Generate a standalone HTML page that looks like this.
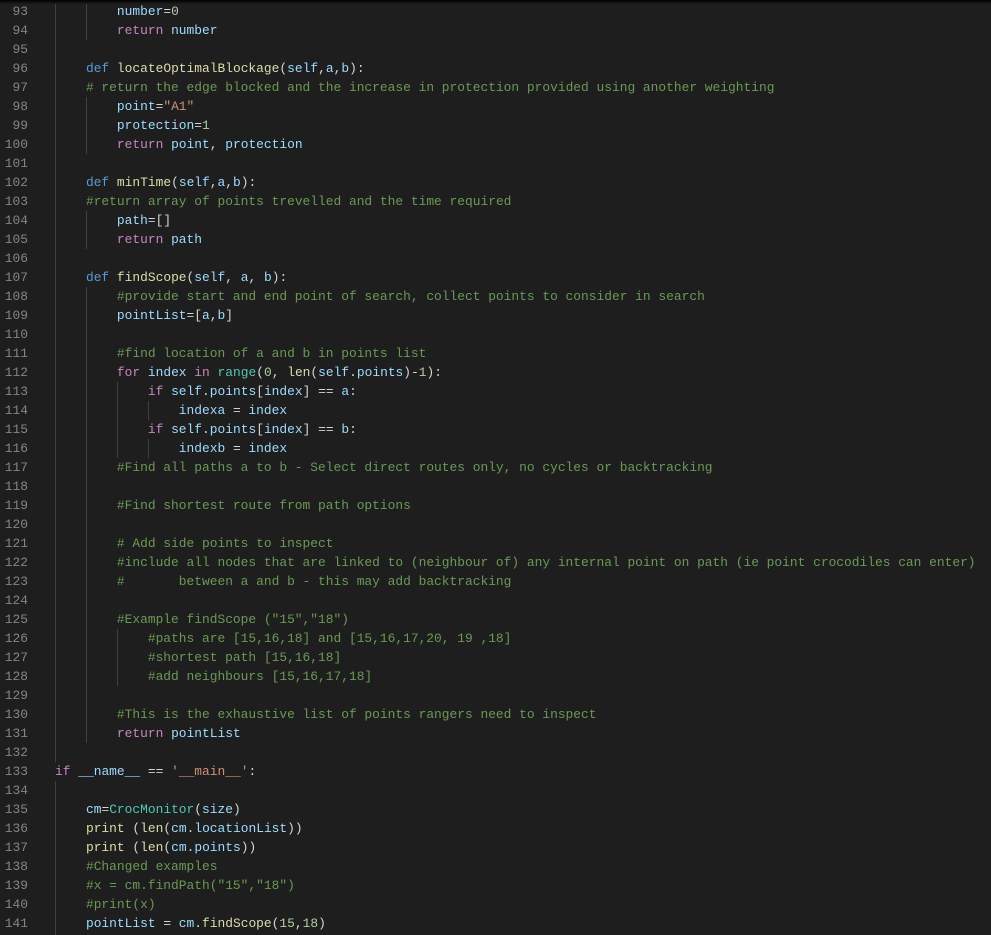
<!DOCTYPE html><html><head><style>
body{margin:0;background:#1e1e1e;width:991px;height:935px;overflow:hidden;position:relative}
.top{position:absolute;left:0;top:0;width:991px;height:4px;background:linear-gradient(#000,#1e1e1e)}
.l{position:absolute;left:0;height:19px;line-height:19px;font-family:"Liberation Mono",monospace;font-size:12.9px;white-space:pre;color:#d4d4d4}
.n{position:absolute;left:0;width:28px;text-align:right;color:#858585}
.c{position:absolute;left:55px}
.g{position:absolute;width:1px;background:#404040}
.k{color:#569cd6}.f{color:#dcdcaa}.v{color:#9cdcfe}.r{color:#c586c0}.m{color:#6a9955}.s{color:#ce9178}.d{color:#b5cea8}.t{color:#4ec9b0}
</style></head><body>
<div class="g" style="left:55px;top:2px;height:760px"></div>
<div class="g" style="left:86px;top:2px;height:38px"></div>
<div class="g" style="left:86px;top:97px;height:57px"></div>
<div class="g" style="left:86px;top:211px;height:38px"></div>
<div class="g" style="left:86px;top:287px;height:456px"></div>
<div class="g" style="left:117px;top:382px;height:76px"></div>
<div class="g" style="left:117px;top:629px;height:57px"></div>
<div class="g" style="left:148px;top:401px;height:19px"></div>
<div class="g" style="left:148px;top:439px;height:19px"></div>
<div class="top"></div>
<div class="l" style="top:2px"><span class="n">93</span><span class="c">        <span class="v">number</span>=<span class="d">0</span></span></div>
<div class="l" style="top:21px"><span class="n">94</span><span class="c">        <span class="r">return</span> <span class="v">number</span></span></div>
<div class="l" style="top:40px"><span class="n">95</span></div>
<div class="l" style="top:59px"><span class="n">96</span><span class="c">    <span class="k">def</span> <span class="f">locateOptimalBlockage</span>(<span class="v">self</span>,<span class="v">a</span>,<span class="v">b</span>):</span></div>
<div class="l" style="top:78px"><span class="n">97</span><span class="c">    <span class="m"># return the edge blocked and the increase in protection provided using another weighting</span></span></div>
<div class="l" style="top:97px"><span class="n">98</span><span class="c">        <span class="v">point</span>=<span class="s">"A1"</span></span></div>
<div class="l" style="top:116px"><span class="n">99</span><span class="c">        <span class="v">protection</span>=<span class="d">1</span></span></div>
<div class="l" style="top:135px"><span class="n">100</span><span class="c">        <span class="r">return</span> <span class="v">point</span>, <span class="v">protection</span></span></div>
<div class="l" style="top:154px"><span class="n">101</span></div>
<div class="l" style="top:173px"><span class="n">102</span><span class="c">    <span class="k">def</span> <span class="f">minTime</span>(<span class="v">self</span>,<span class="v">a</span>,<span class="v">b</span>):</span></div>
<div class="l" style="top:192px"><span class="n">103</span><span class="c">    <span class="m">#return array of points trevelled and the time required</span></span></div>
<div class="l" style="top:211px"><span class="n">104</span><span class="c">        <span class="v">path</span>=[]</span></div>
<div class="l" style="top:230px"><span class="n">105</span><span class="c">        <span class="r">return</span> <span class="v">path</span></span></div>
<div class="l" style="top:249px"><span class="n">106</span></div>
<div class="l" style="top:268px"><span class="n">107</span><span class="c">    <span class="k">def</span> <span class="f">findScope</span>(<span class="v">self</span>, <span class="v">a</span>, <span class="v">b</span>):</span></div>
<div class="l" style="top:287px"><span class="n">108</span><span class="c">        <span class="m">#provide start and end point of search, collect points to consider in search</span></span></div>
<div class="l" style="top:306px"><span class="n">109</span><span class="c">        <span class="v">pointList</span>=[<span class="v">a</span>,<span class="v">b</span>]</span></div>
<div class="l" style="top:325px"><span class="n">110</span></div>
<div class="l" style="top:344px"><span class="n">111</span><span class="c">        <span class="m">#find location of a and b in points list</span></span></div>
<div class="l" style="top:363px"><span class="n">112</span><span class="c">        <span class="r">for</span> <span class="v">index</span> <span class="r">in</span> <span class="t">range</span>(<span class="d">0</span>, <span class="f">len</span>(<span class="v">self</span>.<span class="v">points</span>)-<span class="d">1</span>):</span></div>
<div class="l" style="top:382px"><span class="n">113</span><span class="c">            <span class="r">if</span> <span class="v">self</span>.<span class="v">points</span>[<span class="v">index</span>] == <span class="v">a</span>:</span></div>
<div class="l" style="top:401px"><span class="n">114</span><span class="c">                <span class="v">indexa</span> = <span class="v">index</span></span></div>
<div class="l" style="top:420px"><span class="n">115</span><span class="c">            <span class="r">if</span> <span class="v">self</span>.<span class="v">points</span>[<span class="v">index</span>] == <span class="v">b</span>:</span></div>
<div class="l" style="top:439px"><span class="n">116</span><span class="c">                <span class="v">indexb</span> = <span class="v">index</span></span></div>
<div class="l" style="top:458px"><span class="n">117</span><span class="c">        <span class="m">#Find all paths a to b - Select direct routes only, no cycles or backtracking</span></span></div>
<div class="l" style="top:477px"><span class="n">118</span></div>
<div class="l" style="top:496px"><span class="n">119</span><span class="c">        <span class="m">#Find shortest route from path options</span></span></div>
<div class="l" style="top:515px"><span class="n">120</span></div>
<div class="l" style="top:534px"><span class="n">121</span><span class="c">        <span class="m"># Add side points to inspect</span></span></div>
<div class="l" style="top:553px"><span class="n">122</span><span class="c">        <span class="m">#include all nodes that are linked to (neighbour of) any internal point on path (ie point crocodiles can enter)</span></span></div>
<div class="l" style="top:572px"><span class="n">123</span><span class="c">        <span class="m">#       between a and b - this may add backtracking</span></span></div>
<div class="l" style="top:591px"><span class="n">124</span></div>
<div class="l" style="top:610px"><span class="n">125</span><span class="c">        <span class="m">#Example findScope ("15","18")</span></span></div>
<div class="l" style="top:629px"><span class="n">126</span><span class="c">            <span class="m">#paths are [15,16,18] and [15,16,17,20, 19 ,18]</span></span></div>
<div class="l" style="top:648px"><span class="n">127</span><span class="c">            <span class="m">#shortest path [15,16,18]</span></span></div>
<div class="l" style="top:667px"><span class="n">128</span><span class="c">            <span class="m">#add neighbours [15,16,17,18]</span></span></div>
<div class="l" style="top:686px"><span class="n">129</span></div>
<div class="l" style="top:705px"><span class="n">130</span><span class="c">        <span class="m">#This is the exhaustive list of points rangers need to inspect</span></span></div>
<div class="l" style="top:724px"><span class="n">131</span><span class="c">        <span class="r">return</span> <span class="v">pointList</span></span></div>
<div class="l" style="top:743px"><span class="n">132</span></div>
<div class="l" style="top:762px"><span class="n">133</span><span class="c"><span class="r">if</span> <span class="v">__name__</span> == <span class="s">'__main__'</span>:</span></div>
<div class="l" style="top:781px"><span class="n">134</span></div>
<div class="l" style="top:800px"><span class="n">135</span><span class="c">    <span class="v">cm</span>=<span class="t">CrocMonitor</span>(<span class="v">size</span>)</span></div>
<div class="l" style="top:819px"><span class="n">136</span><span class="c">    <span class="f">print</span> (<span class="f">len</span>(<span class="v">cm</span>.<span class="v">locationList</span>))</span></div>
<div class="l" style="top:838px"><span class="n">137</span><span class="c">    <span class="f">print</span> (<span class="f">len</span>(<span class="v">cm</span>.<span class="v">points</span>))</span></div>
<div class="l" style="top:857px"><span class="n">138</span><span class="c">    <span class="m">#Changed examples</span></span></div>
<div class="l" style="top:876px"><span class="n">139</span><span class="c">    <span class="m">#x = cm.findPath("15","18")</span></span></div>
<div class="l" style="top:895px"><span class="n">140</span><span class="c">    <span class="m">#print(x)</span></span></div>
<div class="l" style="top:914px"><span class="n">141</span><span class="c">    <span class="v">pointList</span> = <span class="v">cm</span>.<span class="f">findScope</span>(<span class="d">15</span>,<span class="d">18</span>)</span></div>
<div class="g" style="left:55px;top:781px;height:154px"></div>
</body></html>
